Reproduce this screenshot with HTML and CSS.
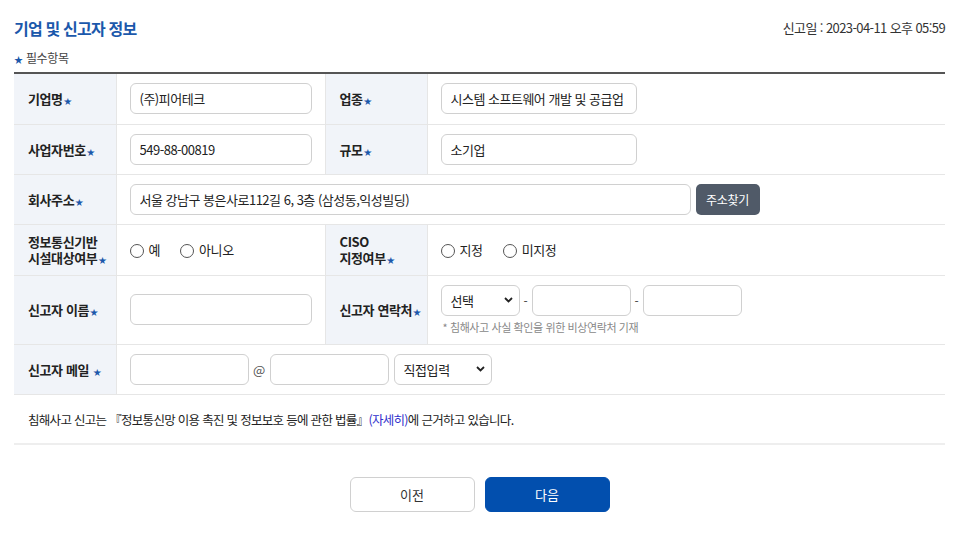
FILE: index.html
```html
<!DOCTYPE html>
<html lang="ko">
<head>
<meta charset="utf-8">
<link rel="stylesheet" href="styles.css">
</head>
<body>
<div class="page">
  <div class="head">
    <h1 class="title">기업 및 신고자 정보</h1>
    <div class="date">신고일 : 2023-04-11 오후 05:59</div>
  </div>
  <div class="req"><span class="star">★</span> 필수항목</div>
  <table class="form">
    <colgroup>
      <col class="c-th"><col class="c-td1"><col class="c-th"><col>
    </colgroup>
    <tr class="r51">
      <th>기업명<span class="star">★</span></th>
      <td><input class="inp w182" value="(주)피어테크"></td>
      <th>업종<span class="star">★</span></th>
      <td><input class="inp w196" value="시스템 소프트웨어 개발 및 공급업"></td>
    </tr>
    <tr class="r50">
      <th>사업자번호<span class="star">★</span></th>
      <td><input class="inp w182" value="549-88-00819"></td>
      <th>규모<span class="star">★</span></th>
      <td><input class="inp w196" value="소기업"></td>
    </tr>
    <tr class="r50">
      <th>회사주소<span class="star">★</span></th>
      <td colspan="3">
        <div class="row">
          <input class="inp w560" value="서울 강남구 봉은사로112길 6, 3층 (삼성동,익성빌딩)">
          <button class="btn-dark">주소찾기</button>
        </div>
      </td>
    </tr>
    <tr class="r51">
      <th class="two"><span class="ln">정보통신기반</span><span class="ln">시설대상여부<span class="star">★</span></span></th>
      <td>
        <div class="radios">
          <label class="radio"><span class="circle"></span>예</label>
          <label class="radio"><span class="circle"></span>아니오</label>
        </div>
      </td>
      <th class="two"><span class="ln">CISO</span><span class="ln">지정여부<span class="star">★</span></span></th>
      <td>
        <div class="radios">
          <label class="radio"><span class="circle"></span>지정</label>
          <label class="radio"><span class="circle"></span>미지정</label>
        </div>
      </td>
    </tr>
    <tr class="r69">
      <th>신고자 이름<span class="star">★</span></th>
      <td><input class="inp w182"></td>
      <th>신고자 연락처<span class="star">★</span></th>
      <td>
        <div class="row tel">
          <div class="sel w79"><span>선택</span><svg width="9" height="6" viewBox="0 0 9 6"><path d="M1 1l3.5 3.5L8 1" fill="none" stroke="#222" stroke-width="1.8"/></svg></div>
          <span class="dash">-</span>
          <input class="inp w99">
          <span class="dash">-</span>
          <input class="inp w99">
        </div>
        <div class="note">* 침해사고 사실 확인을 위한 비상연락처 기재</div>
      </td>
    </tr>
    <tr class="r50">
      <th>신고자 메일 <span class="star">★</span></th>
      <td colspan="3">
        <div class="row mail">
          <input class="inp w119">
          <span class="at">@</span>
          <input class="inp w119">
          <div class="sel w98"><span>직접입력</span><svg width="9" height="6" viewBox="0 0 9 6"><path d="M1 1l3.5 3.5L8 1" fill="none" stroke="#222" stroke-width="1.8"/></svg></div>
        </div>
      </td>
    </tr>
  </table>
  <div class="law">침해사고 신고는 『정보통신망 이용 촉진 및 정보보호 등에 관한 법률』<a class="more">(자세히)</a>에 근거하고 있습니다.</div>
  <div class="btns">
    <button class="btn btn-prev">이전</button>
    <button class="btn btn-next">다음</button>
  </div>
</div>
</body>
</html>
```
FILE: styles.css
```css
* { box-sizing: border-box; }
html, body { margin: 0; padding: 0; background: #fff; }
body {
  font-family: "Noto Sans CJK KR", "Noto Sans", sans-serif;
  color: #222;
  font-size: 13px;
  letter-spacing: -0.4px;
}
.page { width: 931px; margin-left: 14px; }
.head {
  display: flex;
  justify-content: space-between;
  align-items: flex-end;
  height: 41px;
  padding-bottom: 2px;
}
.title {
  margin: 0;
  font-size: 16px;
  font-weight: 700;
  color: #1b58ab;
  line-height: 22px;
  letter-spacing: -0.8px;
}
.date {
  font-size: 13px;
  letter-spacing: -0.6px;
  color: #333;
  line-height: 20px;
  padding-bottom: 1px;
}
.req {
  font-size: 12px;
  color: #444;
  height: 31px;
  line-height: 18px;
  padding-top: 8px;
}
.star {
  color: #1b58ab;
  font-size: 8px;
  margin-left: 1px;
  letter-spacing: 0;
  vertical-align: baseline;
}
.req .star { margin-left: 0; font-size: 9px; }
.form {
  width: 931px;
  border-collapse: collapse;
  table-layout: fixed;
  border-top: 2px solid #555;
}
.c-th { width: 102px; }
.c-td1 { width: 209px; }
.form th, .form td {
  border-bottom: 1px solid #e6e6e6;
  padding: 0;
  vertical-align: middle;
}
.form th {
  background: #f1f4f9;
  text-align: left;
  padding-left: 14px;
  font-size: 13px;
  font-weight: 700;
  color: #222;
  border-left: 1px solid #e6e6e6;
  border-right: 1px solid #e6e6e6;
}
.form tr th:first-child { border-left: none; }
.ln { display: block; line-height: 16px; height: 16px; }
.form td { padding-left: 13px; }
.r50 > * { height: 50px; }
.r51 > * { height: 51px; }
.r69 > * { height: 69px; }
.inp {
  height: 31px;
  border: 1px solid #d0d0d0;
  border-radius: 6px;
  padding: 0 9px;
  font-family: inherit;
  font-size: 13px;
  letter-spacing: -0.5px;
  color: #222;
  background: #fff;
  display: block;
  outline: none;
}
.w182 { width: 182px; }
.w196 { width: 196px; }
.w560 { width: 561px; }
.w99 { width: 99px; }
.w119 { width: 119px; }
.w79 { width: 79px; }
.w98 { width: 98px; }
.row { display: flex; align-items: center; }
.btn-dark {
  margin-left: 5px;
  width: 64px;
  height: 31px;
  border: none;
  border-radius: 5px;
  background: #505a68;
  color: #fff;
  font-family: inherit;
  font-size: 12px;
  letter-spacing: -0.3px;
  padding: 0;
}
.radios { display: flex; align-items: center; gap: 20px; }
.radio { display: flex; align-items: center; font-size: 13px; color: #222; }
.circle {
  width: 14px;
  height: 14px;
  border: 1px solid #555;
  border-radius: 50%;
  margin-right: 5px;
  margin-top: 2px;
}
.sel {
  height: 31px;
  border: 1px solid #d0d0d0;
  border-radius: 6px;
  display: flex;
  align-items: center;
  justify-content: space-between;
  padding: 0 6px 0 9px;
  font-size: 13px;
  background: #fff;
}
.dash { width: 12px; text-align: center; color: #444; font-size: 12px; }
.note {
  font-size: 11px;
  color: #888;
  margin-top: 3px;
  padding-left: 2px;
}
.at { width: 21px; text-align: center; color: #555; font-size: 13px; }
.mail .sel { margin-left: 5px; }
.law {
  height: 50px;
  line-height: 50px;
  padding-left: 14px;
  font-size: 12.5px;
  letter-spacing: -0.7px;
  color: #222;
  border-bottom: 2px solid #eee;
}
.more { color: #3030cc; }
.btns {
  display: flex;
  justify-content: center;
  gap: 10px;
  padding-top: 32px;
}
.btn {
  width: 125px;
  height: 35px;
  border-radius: 6px;
  font-family: inherit;
  font-size: 13px;
}
.btn-prev { background: #fff; border: 1px solid #d0d0d0; color: #333; }
.btn-next { background: #024fae; border: 1px solid #024fae; color: #fff; }
```
